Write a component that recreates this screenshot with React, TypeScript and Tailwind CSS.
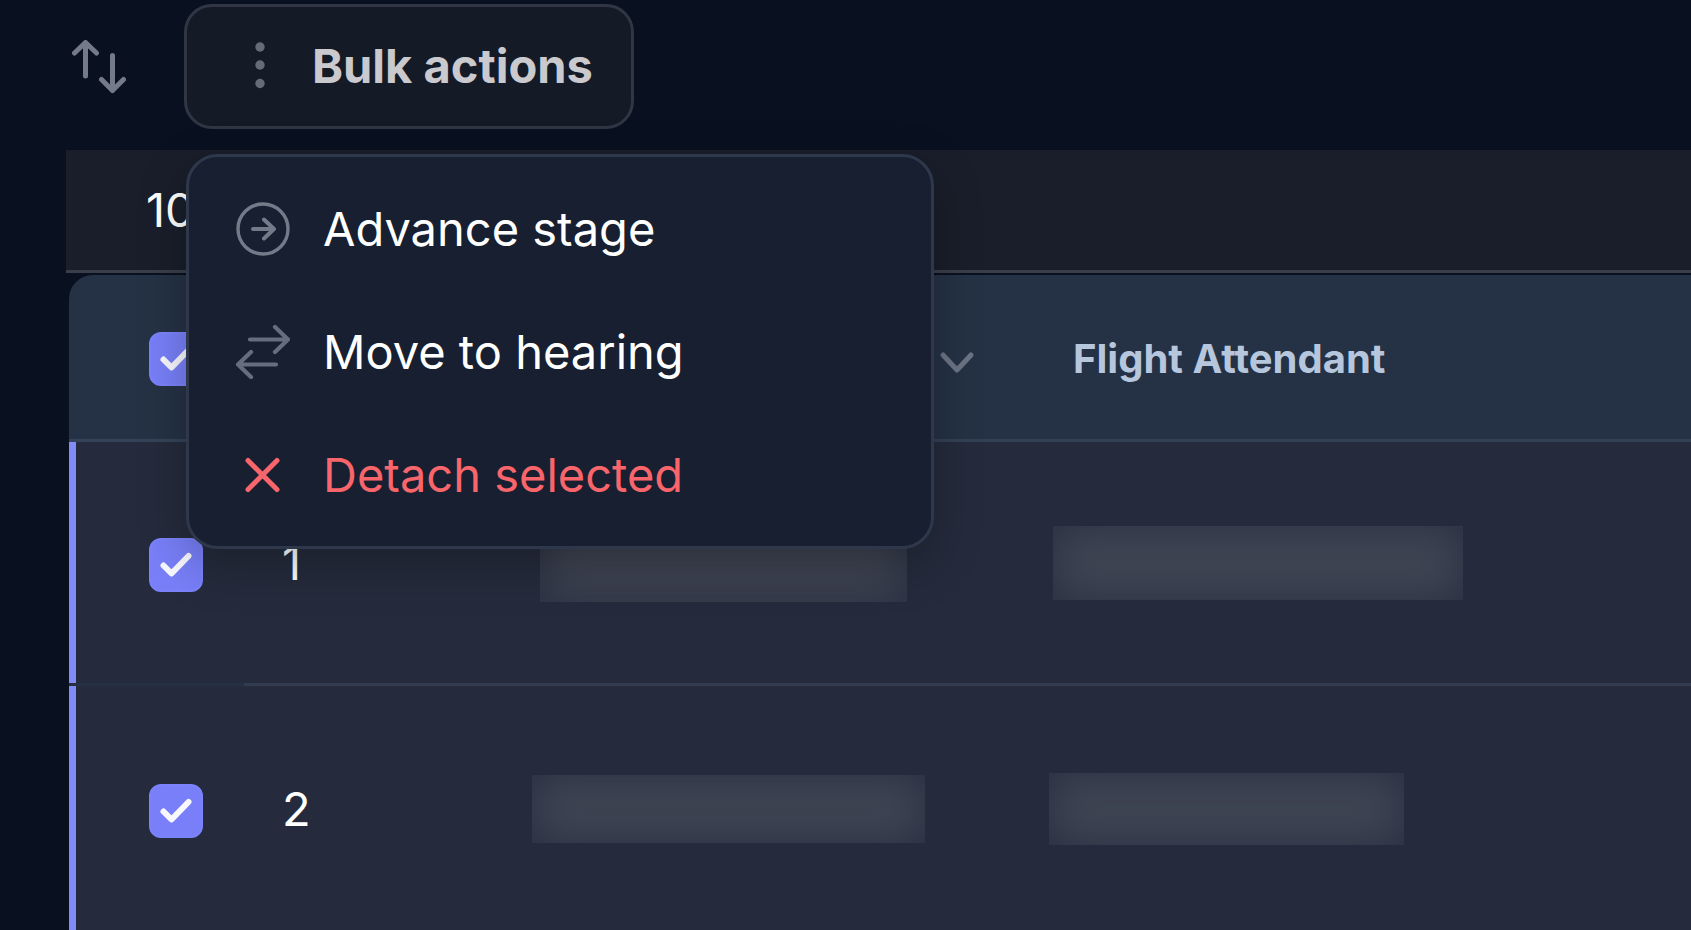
import { useState } from 'react';

type Row = { id: number; name: string; role: string };

// Sizes of the redacted values in each row
const rows: Row[] = [
  { id: 1, name: 'ml-6 h-[78px] w-[367px]', role: 'ml-5 h-[74px] w-[410px]' },
  { id: 2, name: 'ml-4 h-[68px] w-[393px]', role: 'ml-4 h-[72px] w-[355px]' },
];

function SortIcon() {
  return (
    <svg
      className="h-[54px] w-[54px]"
      viewBox="0 0 54 54"
      fill="none"
      stroke="currentColor"
      strokeWidth="5"
      strokeLinecap="round"
      strokeLinejoin="round"
    >
      <path d="M13.5 36V2.5M2.5 13 13.5 2.5l11 10.5" />
      <path d="M40.5 15.5v35M29.5 39.5l11 11 11-11" />
    </svg>
  );
}

function DotsIcon() {
  return (
    <svg className="h-[54px] w-[54px]" viewBox="0 0 54 54" fill="currentColor">
      <circle cx="27" cy="8" r="4.7" />
      <circle cx="27" cy="26" r="4.7" />
      <circle cx="27" cy="44.5" r="4.7" />
    </svg>
  );
}

function AdvanceIcon() {
  return (
    <svg
      className="h-[54px] w-[54px]"
      viewBox="0 0 54 54"
      fill="none"
      stroke="currentColor"
      strokeWidth="3.4"
      strokeLinecap="round"
      strokeLinejoin="round"
    >
      <circle cx="27" cy="27" r="25" />
      <path strokeWidth="4" d="M17 27h21M28 17.5 38 27l-10 9.5" />
    </svg>
  );
}

function MoveIcon() {
  return (
    <svg
      className="h-[54px] w-[54px]"
      viewBox="0 0 54 54"
      fill="none"
      stroke="currentColor"
      strokeWidth="4.2"
      strokeLinecap="round"
      strokeLinejoin="round"
    >
      <path d="M14 14.5h38M39 2l13 12.5L39 27" />
      <path d="M40 39.5H2M15 27 2 39.5 15 52" />
    </svg>
  );
}

function DetachIcon() {
  return (
    <svg
      className="h-[54px] w-[54px]"
      viewBox="0 0 54 54"
      fill="none"
      stroke="currentColor"
      strokeWidth="5"
      strokeLinecap="round"
    >
      <path d="m12 12.5 29 29M41 12.5l-29 29" />
    </svg>
  );
}

function Checkbox({ label, checked, onChange }: { label: string; checked: boolean; onChange: () => void }) {
  return (
    <label className="grid h-[54px] w-[54px]">
      <input
        type="checkbox"
        aria-label={label}
        checked={checked}
        onChange={onChange}
        className="col-start-1 row-start-1 h-[54px] w-[54px] appearance-none rounded-xl border-2 border-[#7b83fb] checked:bg-[#787ff8]"
      />
      {checked && (
        <svg
          className="pointer-events-none col-start-1 row-start-1 h-[54px] w-[54px] text-[#f8f8ff]"
          viewBox="0 0 54 54"
          fill="none"
          stroke="currentColor"
          strokeWidth="6"
          strokeLinecap="round"
          strokeLinejoin="round"
        >
          <path d="m14.5 27.5 8 8L39.5 18" />
        </svg>
      )}
    </label>
  );
}

function Redacted({ className }: { className: string }) {
  return <div className={`bg-[#3f4553] shadow-[inset_0_0_44px_#292f40] ${className}`} />;
}

const menuItems = [
  { label: 'Advance stage', icon: AdvanceIcon, iconColor: 'text-[#737a88]', color: 'text-white' },
  { label: 'Move to hearing', icon: MoveIcon, iconColor: 'text-[#666d7c]', color: 'text-white' },
  { label: 'Detach selected', icon: DetachIcon, iconColor: 'text-[#f8656b]', color: 'text-[#f8656b]' },
];

function BulkMenu() {
  return (
    <div
      role="menu"
      className="absolute top-[150px] left-0.5 z-10 w-[748px] rounded-[32px] border-3 border-[#2e384a] bg-[#171f31] py-2.5 shadow-[0_16px_48px_rgba(0,0,0,0.25)]"
    >
      {menuItems.map(({ label, icon: Icon, iconColor, color }) => (
        <button
          key={label}
          type="button"
          role="menuitem"
          className={`flex h-[123px] w-full items-center gap-[33px] pl-[47px] text-left text-[47px] leading-[56px] ${color}`}
        >
          <span className={iconColor}>
            <Icon />
          </span>
          {label}
        </button>
      ))}
    </div>
  );
}

export default function App() {
  const [selected, setSelected] = useState<number[]>([1, 2]);
  const [open, setOpen] = useState(true);
  const allSelected = selected.length === rows.length;

  const toggle = (id: number) =>
    setSelected((ids) => (ids.includes(id) ? ids.filter((i) => i !== id) : [...ids, id]));

  return (
    <div className="h-screen overflow-hidden bg-[#09101f] font-['Inter',sans-serif] text-white">
      {/* Toolbar */}
      <div className="flex items-center gap-[58px] pt-1 pb-[21px] pl-[72px]">
        <button type="button" aria-label="Sort" className="text-[#747a87]">
          <SortIcon />
        </button>
        <div className="relative">
          <button
            type="button"
            aria-haspopup="menu"
            aria-expanded={open}
            onClick={() => setOpen(!open)}
            className="flex h-[125px] w-[450px] items-center gap-[25px] rounded-[28px] border-3 border-[#303643] bg-[#151a27] pb-0.5 pl-[46px] text-[47px] leading-[56px] font-bold text-[#c9c9ce]"
          >
            <span className="text-[#666b78]">
              <DotsIcon />
            </span>
            Bulk actions
          </button>
          {open && <BulkMenu />}
        </div>
      </div>

      {/* Selection count */}
      <div className="ml-[66px] flex h-[123px] items-center border-b-3 border-[#393e4a] bg-[#191e2a] pl-20 text-[47px] leading-[56px]">
        10
      </div>

      <div className="pt-0.5 pl-[69px]">
        <table className="w-full table-fixed border-separate border-spacing-0 text-left">
          <colgroup>
            <col className="w-[175px]" />
            <col className="w-[272px]" />
            <col className="w-[517px]" />
            <col />
          </colgroup>
          <thead>
            <tr className="h-[167px] text-[40px] leading-[48px] text-[#b6c6dc]">
              <th className="rounded-tl-3xl border-b-3 border-[#35435a] bg-[#253245] pt-1 pl-20">
                <Checkbox
                  label="Select all"
                  checked={allSelected}
                  onChange={() => setSelected(allSelected ? [] : rows.map((r) => r.id))}
                />
              </th>
              <th className="border-b-3 border-[#334154] bg-[#253245]" />
              <th className="border-b-3 border-[#334154] bg-[#253245] pt-1 pr-[56px]">
                <svg
                  className="ml-auto h-10 w-10 text-[#6b7484]"
                  viewBox="0 0 40 40"
                  fill="none"
                  stroke="currentColor"
                  strokeWidth="5"
                  strokeLinecap="round"
                  strokeLinejoin="round"
                >
                  <path d="m6 16 14 15 14-15" />
                </svg>
              </th>
              <th className="border-b-3 border-[#334154] bg-[#253245] pt-1 pl-10 font-bold">Flight Attendant</th>
            </tr>
          </thead>
          <tbody>
            {rows.map((row) => (
              <tr key={row.id} className="h-[244px] text-[47px] leading-[56px] last:h-[248px]">
                <td className="border-b-3 border-[#253142] bg-[#252b3c] pt-1 pl-20 shadow-[inset_7px_0_0_#818cf8]">
                  <Checkbox label={`Select row ${row.id}`} checked={selected.includes(row.id)} onChange={() => toggle(row.id)} />
                </td>
                <td className="border-b-3 border-[#323b4f] bg-[#252b3c] pl-[38px]">{row.id}</td>
                <td className="border-b-3 border-[#323b4f] bg-[#252b3c]">
                  <Redacted className={row.name} />
                </td>
                <td className="border-b-3 border-[#323b4f] bg-[#252b3c]">
                  <Redacted className={row.role} />
                </td>
              </tr>
            ))}
          </tbody>
        </table>
      </div>
    </div>
  );
}
